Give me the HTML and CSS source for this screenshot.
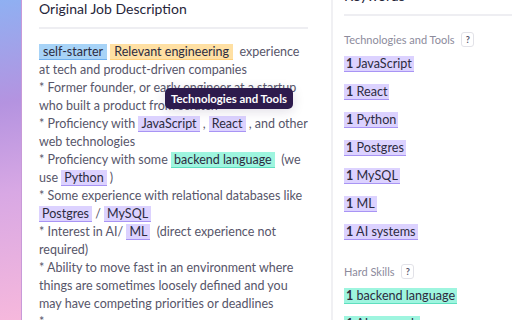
FILE: index.html
```html
<!DOCTYPE html>
<html lang="en">
<head>
  <meta charset="UTF-8">
  <title>Job Description Keywords</title>
  <link rel="stylesheet" href="styles.css">
</head>
<body>

  <div class="page">
    <div class="strip"></div>

    <div class="description">
      <h2>Original Job Description</h2>
      <div class="desc-text">
        <span class="hl hl-soft">self-starter</span> <span class="hl hl-yellow">Relevant engineering</span>&nbsp; experience at tech and product-driven companies<br>
        * Former founder, or early engineer at a startup who built a product from scratch<br>
        * Proficiency with <span class="hl hl-tech">JavaScript</span> , <span class="hl hl-tech">React</span> , and other web technologies<br>
        * Proficiency with some <span class="hl hl-hard">backend language</span>&nbsp; (we use <span class="hl hl-tech">Python</span> )<br>
        * Some experience with relational databases like <span class="hl hl-tech">Postgres</span> / <span class="hl hl-tech">MySQL</span><br>
        * Interest in AI/ <span class="hl hl-tech">ML</span>&nbsp; (direct experience not required)<br>
        * Ability to move fast in an environment where things are sometimes loosely defined and you may have competing priorities or deadlines<br>
        *

        <div class="tooltip">Technologies and Tools</div>
      </div>
    </div>

    <div class="keywords">
      <h2>Keywords</h2>

      <div class="group">
        <div class="group-title">Technologies and Tools <span class="help">?</span></div>
        <div class="chip chip-tech"><b>1</b> JavaScript</div>
        <div class="chip chip-tech"><b>1</b> React</div>
        <div class="chip chip-tech"><b>1</b> Python</div>
        <div class="chip chip-tech"><b>1</b> Postgres</div>
        <div class="chip chip-tech"><b>1</b> MySQL</div>
        <div class="chip chip-tech"><b>1</b> ML</div>
        <div class="chip chip-tech"><b>1</b> AI systems</div>
      </div>

      <div class="group">
        <div class="group-title">Hard Skills <span class="help">?</span></div>
        <div class="chip chip-hard"><b>1</b> backend language</div>
        <div class="chip chip-hard"><b>1</b> AI research</div>
      </div>
    </div>
  </div>

</body>
</html>
```

FILE: styles.css
```css
body {
  margin: 0;
  background-color: white;
  font-family: Lato, "Open Sans", sans-serif;
  color: #57566a;
  overflow: hidden;
}
.page {
  display: flex;
  height: 320px;
  overflow: hidden;
}
.strip {
  width: 21px;
  flex-shrink: 0;
  background: linear-gradient(170deg, #8fb0f2 0%, #b493e0 32%, #d8a8e4 60%, #f6b8dc 100%);
  border-right: 1px solid #c89ad8;
}
.description {
  width: 269px;
  padding: 0 23px 0 17px;
  flex-shrink: 0;
}
.description h2 {
  font-size: 14px;
  font-weight: 400;
  color: #26253a;
  margin: 0;
  padding: 0 0 9px;
  line-height: 18px;
  border-bottom: 2px solid #eeeef2;
}
.desc-text {
  position: relative;
  margin: 14px -2px 0 0;
  font-size: 12.5px;
  line-height: 18px;
}
.hl {
  color: #2c2b40;
  padding: 0 3px;
  border-bottom: 1px solid transparent;
}
.hl-soft {
  padding: 0 4px;
  background-color: #a7d3f7;
  border-color: #6fb0ee;
}
.hl-yellow {
  padding: 0 4px;
  background-color: #ffe0a3;
  border-color: #ffd07a;
}
.hl-tech {
  background-color: #dcd2ff;
  border-color: #a894f4;
}
.hl-hard {
  background-color: #9ef5df;
  border-color: #5fdfbf;
}
.tooltip {
  position: absolute;
  left: 126px;
  top: 45px;
  padding: 2px 6px;
  background-color: #2d1b4d;
  color: white;
  font-size: 11.4px;
  font-weight: 700;
  line-height: 17px;
  border-radius: 5px;
  box-shadow: 0 2px 12px rgba(40,20,80,0.15);
}
.keywords {
  flex: 1;
  border-left: 2px solid #f0f0f3;
  padding-left: 11px;
}
.keywords h2 {
  font-size: 14px;
  font-weight: 400;
  color: #26253a;
  margin: -13px 0 0;
  padding-bottom: 9px;
  line-height: 18px;
  border-bottom: 2px solid #eeeef2;
}
.group {
  margin-top: 15px;
  margin-bottom: 23px;
}
.group-title {
  font-size: 11px;
  color: #8c8b9c;
  line-height: 18px;
  margin-bottom: 7px;
}
.help {
  display: inline-block;
  width: 11px;
  height: 13px;
  margin-left: 4px;
  border: 1px solid #e2e2e8;
  border-radius: 3px;
  font-size: 9px;
  font-weight: 700;
  line-height: 13px;
  text-align: center;
  color: #55546a;
  vertical-align: 1px;
}
.chip {
  display: table;
  margin-bottom: 12px;
  padding: 0 2px;
  font-size: 12.6px;
  line-height: 15px;
  color: #2c2b40;
  border-bottom: 1px solid transparent;
}
.chip-tech {
  background-color: #dcd2ff;
  border-color: #a894f4;
}
.chip-hard {
  background-color: #9ef5df;
  border-color: #5fdfbf;
}
```
